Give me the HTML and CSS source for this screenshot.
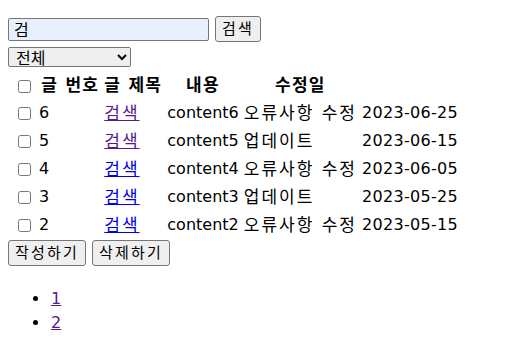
FILE: index.html
```html
<!DOCTYPE html>
<html lang="ko">
<head>
  <meta charset="UTF-8" />
  <meta name="viewport" content="width=device-width, initial-scale=1.0" />
  <title>게시판</title>
  <link rel="stylesheet" href="styles.css">
</head>
<body>
  <form class="search" onsubmit="return false;">
    <div class="search-row">
      <input type="text" name="keyword" class="keyword" value="검" />
      <button type="submit">검색</button>
    </div>
    <div class="filter-row">
      <select name="type" class="type">
        <option value="all">전체</option>
        <option value="title">글 제목</option>
        <option value="content">내용</option>
      </select>
    </div>
  </form>

  <table class="board">
    <thead>
      <tr>
        <th class="no"><input type="checkbox" /> 글 번호</th>
        <th>글 제목</th>
        <th>내용</th>
        <th>수정일</th>
      </tr>
    </thead>
    <tbody>
      <tr>
        <td class="no"><input type="checkbox" /> 6</td>
        <td class="subject"><a href="#" class="visited">검색</a></td>
        <td>content6</td>
        <td class="memo">오류사항 수정</td>
        <td class="date">2023-06-25</td>
      </tr>
      <tr>
        <td class="no"><input type="checkbox" /> 5</td>
        <td class="subject"><a href="#" class="visited">검색</a></td>
        <td>content5</td>
        <td class="memo">업데이트</td>
        <td class="date">2023-06-15</td>
      </tr>
      <tr>
        <td class="no"><input type="checkbox" /> 4</td>
        <td class="subject"><a href="#">검색</a></td>
        <td>content4</td>
        <td class="memo">오류사항 수정</td>
        <td class="date">2023-06-05</td>
      </tr>
      <tr>
        <td class="no"><input type="checkbox" /> 3</td>
        <td class="subject"><a href="#">검색</a></td>
        <td>content3</td>
        <td class="memo">업데이트</td>
        <td class="date">2023-05-25</td>
      </tr>
      <tr>
        <td class="no"><input type="checkbox" /> 2</td>
        <td class="subject"><a href="#">검색</a></td>
        <td>content2</td>
        <td class="memo">오류사항 수정</td>
        <td class="date">2023-05-15</td>
      </tr>
    </tbody>
  </table>

  <div class="actions">
    <button type="button">작성하기</button>
    <button type="button">삭제하기</button>
  </div>

  <ul class="paging">
    <li><a href="#" class="visited">1</a></li>
    <li><a href="#" class="visited">2</a></li>
  </ul>
</body>
</html>
```

FILE: styles.css
```css
body {
  font-family: "DejaVu Sans", "Noto Sans CJK KR", sans-serif;
  font-size: 16px;
  line-height: 24px;
  margin: 0;
  padding: 16px 8px 0;
  color: #000;
  background: #fff;
}
input, select, button {
  font-family: "DejaVu Sans", "Noto Sans CJK KR", sans-serif;
  font-size: 15px;
}
.search-row {
  display: flex;
  align-items: center;
  gap: 6px;
}
.keyword {
  box-sizing: border-box;
  width: 201px;
  height: 23px;
  margin: 0;
  padding: 0 5px;
  border: 1px solid #767676;
  border-radius: 2px;
  background: #e8f0fe;
  font-size: 16px;
  line-height: 21px;
}
button {
  box-sizing: border-box;
  height: 26px;
  margin: 0;
  padding: 1px 6px;
  border: 1px solid #767676;
  border-radius: 3px;
  background: #efefef;
  letter-spacing: 2.2px;
  line-height: 22px;
  color: #000;
  cursor: pointer;
}
button:hover {
  background: #e5e5e5;
}
.filter-row {
  margin-top: 5px;
  display: flex;
}
.type {
  box-sizing: border-box;
  width: 123px;
  height: 20px;
  margin: 0;
  padding-left: 3px;
  border: 1px solid #767676;
  border-radius: 2px;
  font-size: 16px;
  line-height: 18px;
}
.board {
  margin-top: 3px;
  border-spacing: 2px;
}
.board th,
.board td {
  height: 24px;
  padding: 1px 2px 1px 1px;
  line-height: 24px;
  vertical-align: middle;
  white-space: nowrap;
}
.board th {
  font-size: 17px;
  font-weight: bold;
  letter-spacing: 1.3px;
}
.board .no {
  padding-left: 4px;
  text-align: left;
}
.board input[type="checkbox"] {
  margin: 3px 3px 3px 4px;
  vertical-align: -2px;
}
.subject,
.memo {
  font-size: 17px;
  letter-spacing: 2px;
}
.date {
  letter-spacing: 0.3px;
}
a {
  color: #0000ee;
}
a.visited {
  color: #551a8b;
}
.actions {
  display: flex;
  gap: 6px;
}
.paging {
  margin: 21px 0 0;
  padding-left: 42px;
}
.paging li {
  line-height: 24px;
}
.paging a {
  padding-left: 1px;
}
```
